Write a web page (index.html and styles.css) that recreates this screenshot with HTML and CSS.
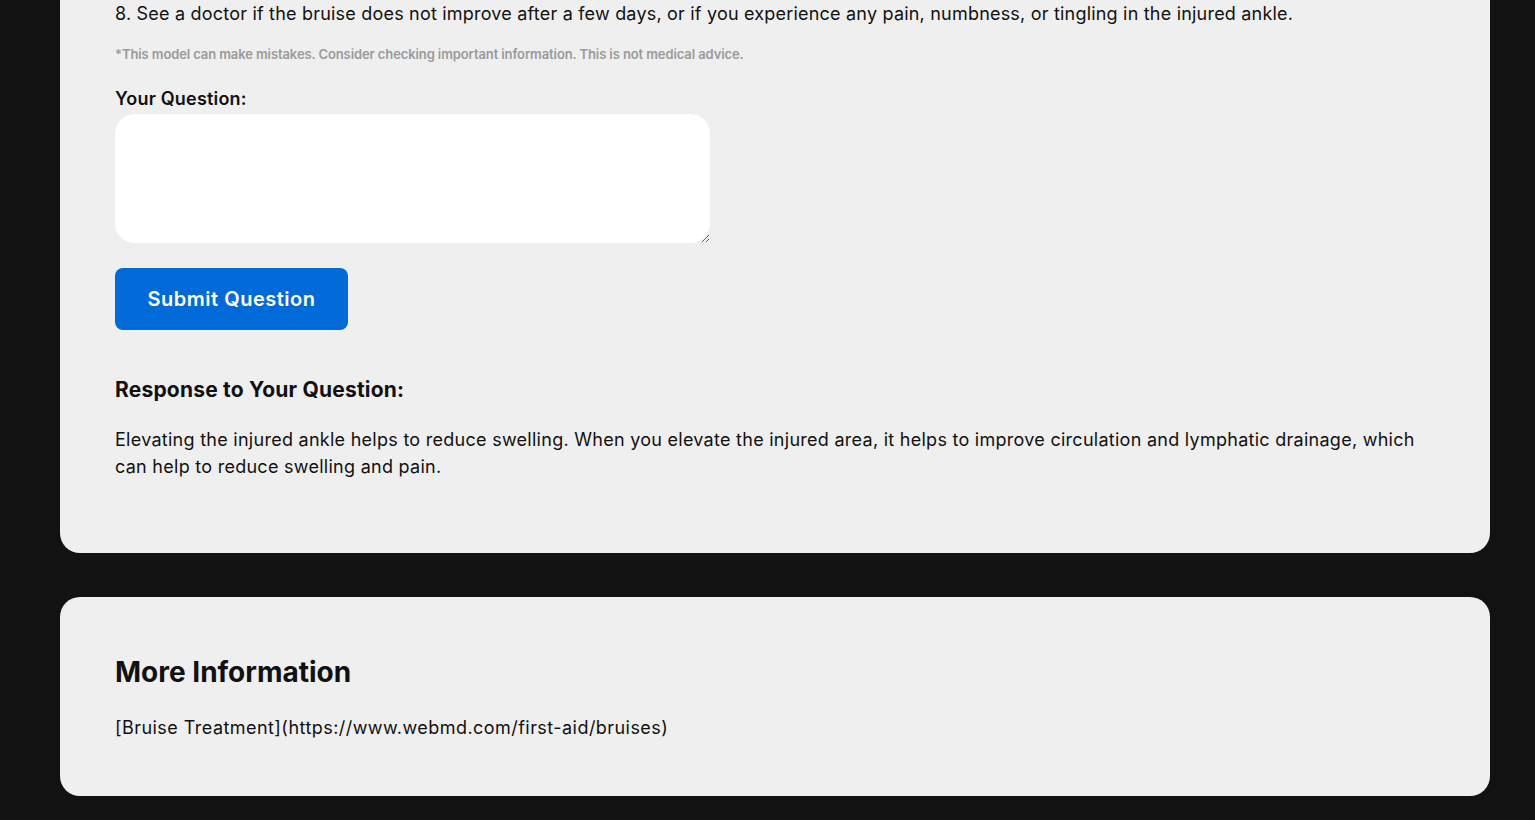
FILE: index.html
```html
<!DOCTYPE html>
<html lang="en">
<head>
  <meta charset="UTF-8">
  <meta name="viewport" content="width=device-width, initial-scale=1.0">
  <title>Bruise Care - Ask a Question</title>
  <link rel="stylesheet" href="styles.css">
</head>
<body>
  <div class="page">
    <div class="card card-answer">
      <p class="step">8. See a doctor if the bruise does not improve after a few days, or if you experience any pain, numbness, or tingling in the injured ankle.</p>
      <p class="disclaimer">*This model can make mistakes. Consider checking important information. This is not medical advice.</p>
      <form class="ask-form" onsubmit="return false;">
        <label class="ask-label" for="question">Your Question:</label>
        <textarea class="ask-input" id="question" name="question"></textarea>
        <button class="submit-btn" type="submit">Submit Question</button>
      </form>
      <h3 class="response-title">Response to Your Question:</h3>
      <p class="response-text">Elevating the injured ankle helps to reduce swelling. When you elevate the injured area, it helps to improve circulation and lymphatic drainage, which can help to reduce swelling and pain.</p>
    </div>
    <div class="card card-info">
      <h2 class="info-title">More Information</h2>
      <p class="info-link">[Bruise Treatment](https://www.webmd.com/first-aid/bruises)</p>
    </div>
  </div>
</body>
</html>
```

FILE: styles.css
```css
:root {
  --page-bg: #121212;
  --card-bg: #efefef;
  --text: #111;
  --muted: #9a9a9a;
  --blue: #006ad9;
  --main-font: 'Inter', 'Open Sans', Arial, sans-serif;
}
html, body {
  margin: 0;
  padding: 0;
  background: var(--page-bg);
  color: var(--text);
  font-family: var(--main-font);
}
.page {
  padding: 0 45px 24px 60px;
  display: flex;
  flex-direction: column;
  gap: 44px;
}
.card {
  background: var(--card-bg);
  border-radius: 20px;
  padding: 55px;
}
.card-answer {
  margin-top: -55px;
}
.step {
  margin: 0;
  font-size: 18px;
  line-height: 27px;
  letter-spacing: 0.2px;
}
.disclaimer {
  margin: 17px 0 23px 0;
  font-size: 13px;
  line-height: 20px;
  font-weight: 600;
  color: var(--muted);
  letter-spacing: -0.1px;
}
.ask-form {
  display: flex;
  flex-direction: column;
  align-items: flex-start;
}
.ask-label {
  font-size: 18px;
  font-weight: 600;
  line-height: 24px;
  margin-bottom: 3px;
  letter-spacing: 0.2px;
}
.ask-input {
  width: 595px;
  height: 129px;
  box-sizing: border-box;
  border: none;
  border-radius: 20px;
  background: #fff;
  padding: 12px 16px;
  font-family: var(--main-font);
  font-size: 16px;
  outline: none;
}
.submit-btn {
  margin-top: 25px;
  width: 233px;
  height: 62px;
  background: var(--blue);
  color: #fff;
  border: none;
  border-radius: 8px;
  font-family: var(--main-font);
  font-size: 20px;
  font-weight: 600;
  letter-spacing: 0.5px;
  cursor: pointer;
}
.response-title {
  margin: 45px 0 21px 0;
  font-size: 21px;
  line-height: 30px;
  font-weight: 700;
  letter-spacing: 0.2px;
}
.response-text {
  margin: 0 0 18px 0;
  font-size: 18px;
  line-height: 27px;
  letter-spacing: 0.27px;
}
.info-title {
  margin: 0 0 22px 0;
  font-size: 28px;
  line-height: 40px;
  font-weight: 700;
}
.info-link {
  margin: 0;
  font-size: 18px;
  line-height: 27px;
  letter-spacing: 0.45px;
}
```
